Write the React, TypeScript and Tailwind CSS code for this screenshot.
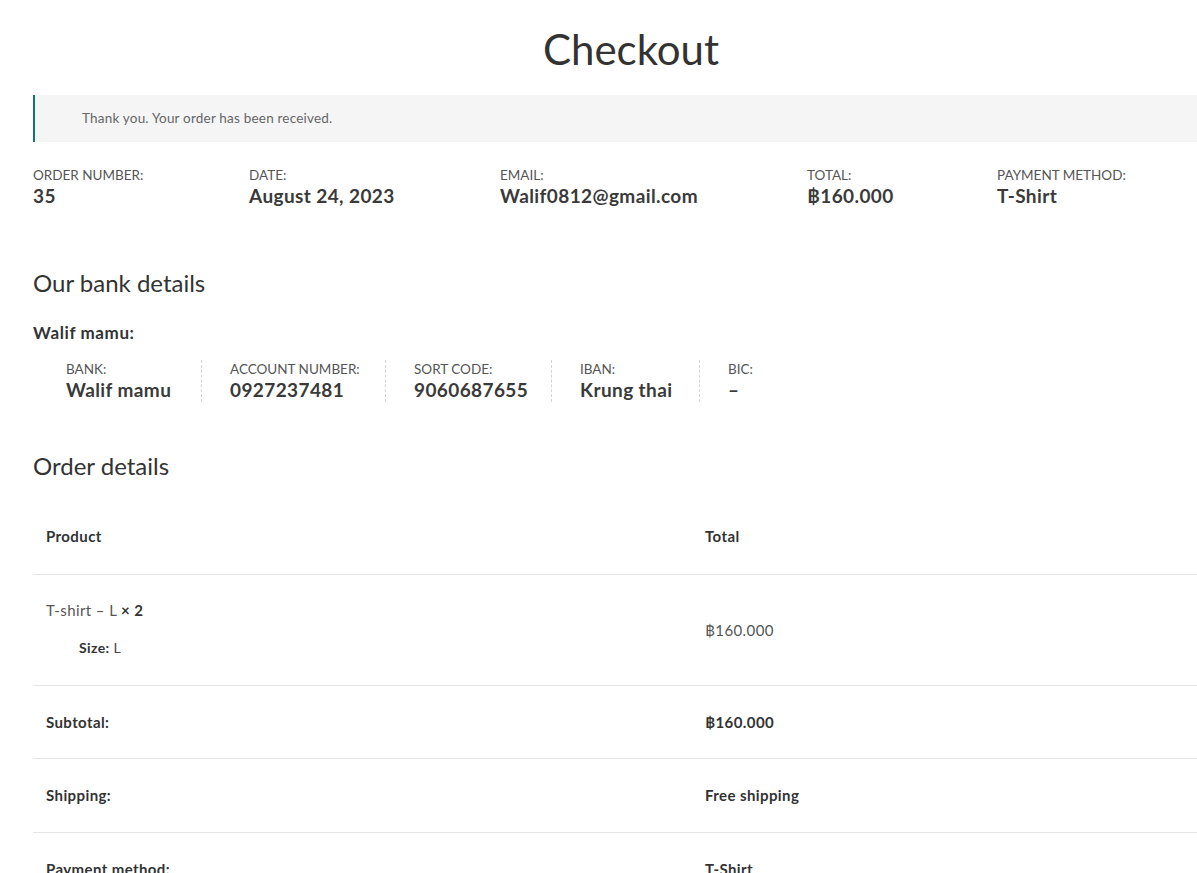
import React from "react"

const overview = [
  { label: "Order number:", value: "35", w: "w-[216px]" },
  { label: "Date:", value: "August 24, 2023", w: "w-[251px]" },
  { label: "Email:", value: "Walif0812@gmail.com", w: "w-[307px]" },
  { label: "Total:", value: "฿160.000", w: "w-[190px]" },
  { label: "Payment method:", value: "T-Shirt", w: "w-[200px]" },
]

const bank = [
  { label: "Bank:", value: "Walif mamu", w: "w-[136px]" },
  { label: "Account number:", value: "0927237481", w: "w-[184px]" },
  { label: "Sort code:", value: "9060687655", w: "w-[166px]" },
  { label: "IBAN:", value: "Krung thai", w: "w-[148px]" },
  { label: "BIC:", value: "–", w: "w-[100px]" },
]

const totals = [
  { label: "Subtotal:", value: "฿160.000", h: "h-[73px]" },
  { label: "Shipping:", value: "Free shipping", h: "h-[74px]" },
  { label: "Payment method:", value: "T-Shirt", h: "h-[74px]" },
]

export default function App() {
  return (
    <div className="w-full min-h-screen overflow-hidden bg-white text-[#333] font-['Lato','Noto_Sans',sans-serif]">
      <div className="ml-[33px] w-[1196px] pb-10">
        {/* Page title */}
        <h1 className="pt-[23px] text-center text-[42px] leading-[52px] font-normal text-[#333]">Checkout</h1>

        {/* Notice */}
        <div className="mt-[20px] h-[47px] flex items-center border-l-2 border-[#0b7a66] bg-[#f5f5f5] pl-[47px] text-[13.5px] tracking-[0.2px] text-[#666]">
          Thank you. Your order has been received.
        </div>

        {/* Order overview */}
        <ul className="mt-[24px] flex">
          {overview.map((item) => (
            <li key={item.label} className={`${item.w} shrink-0`}>
              <div className="text-[13.5px] leading-[18px] uppercase text-[#555]">{item.label}</div>
              <div className="text-[19px] leading-[24px] tracking-[0.4px] font-bold text-[#3a3a3a]">{item.value}</div>
            </li>
          ))}
        </ul>

        {/* Bank details */}
        <h2 className="mt-[60px] text-[24px] leading-[30px] font-normal text-[#333]">Our bank details</h2>
        <h3 className="mt-[24px] text-[17px] leading-[22px] tracking-[0.6px] font-bold text-[#333]">Walif mamu:</h3>
        <ul className="mt-[16px] ml-[33px] flex">
          {bank.map((item, i) => (
            <li
              key={item.label}
              className={`${item.w} shrink-0 ${i === 0 ? "" : "pl-[28px]"} ${i < bank.length - 1 ? "border-r border-dashed border-[#d4d4d4]" : ""}`}
            >
              <div className="text-[13.5px] leading-[18px] uppercase text-[#555]">{item.label}</div>
              <div className="text-[19px] leading-[24px] tracking-[0.4px] font-bold text-[#3a3a3a]">{item.value}</div>
            </li>
          ))}
        </ul>

        {/* Order details */}
        <h2 className="mt-[49px] text-[24px] leading-[30px] font-normal text-[#333]">Order details</h2>
        <div className="mt-[17px] text-[15px] tracking-[0.4px]">
          <div className="grid grid-cols-[659px_1fr] h-[77px] items-center border-b border-[#e5e5e5] font-bold text-[#333]">
            <div className="pl-[13px]">Product</div>
            <div className="pl-[13px]">Total</div>
          </div>
          <div className="grid grid-cols-[659px_1fr] h-[111px] border-b border-[#e5e5e5]">
            <div className="pl-[13px] pt-[25px]">
              <div className="leading-[20px] text-[#555]">
                T-shirt – L <strong className="font-bold text-[#333]">× 2</strong>
              </div>
              <div className="mt-[18px] pl-[33px] text-[14px] leading-[20px] text-[#444]">
                <strong className="font-bold text-[#333]">Size:</strong> L
              </div>
            </div>
            <div className="pl-[13px] flex items-center text-[#555]">฿160.000</div>
          </div>
          {totals.map((row) => (
            <div key={row.label} className={`grid grid-cols-[659px_1fr] ${row.h} items-center border-b border-[#e5e5e5] font-bold text-[#333]`}>
              <div className="pl-[13px]">{row.label}</div>
              <div className="pl-[13px]">{row.value}</div>
            </div>
          ))}
        </div>
      </div>
    </div>
  )
}
